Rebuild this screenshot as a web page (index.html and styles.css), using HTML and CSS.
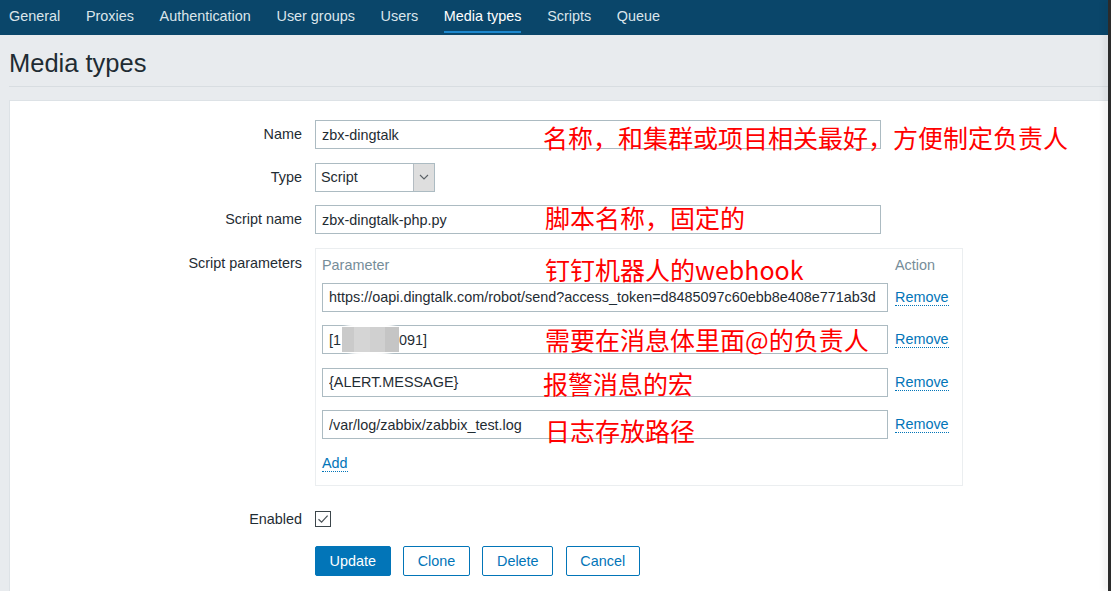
FILE: index.html
```html
<!DOCTYPE html>
<html lang="en">
<head>
<meta charset="utf-8">
<title>Media types</title>
<link rel="stylesheet" href="styles.css">
</head>
<body>
<div class="window">
  <div class="app">
    <nav class="topnav">
      <a class="tab" href="#">General</a>
      <a class="tab" href="#">Proxies</a>
      <a class="tab" href="#">Authentication</a>
      <a class="tab" href="#">User groups</a>
      <a class="tab" href="#">Users</a>
      <a class="tab active" href="#">Media types</a>
      <a class="tab" href="#">Scripts</a>
      <a class="tab" href="#">Queue</a>
    </nav>
    <header class="page-header"><h1>Media types</h1></header>
    <main class="panel">
      <form class="form">
        <div class="form-row">
          <label class="form-label">Name</label>
          <input class="text-input" type="text" value="zbx-dingtalk">
        </div>
        <div class="form-row">
          <label class="form-label">Type</label>
          <div class="select">
            <span class="select-value">Script</span>
            <span class="select-btn"><svg width="10" height="6" viewBox="0 0 10 6"><path d="M1 1 L5 5 L9 1" fill="none" stroke="#5b6166" stroke-width="1.1"/></svg></span>
          </div>
        </div>
        <div class="form-row">
          <label class="form-label">Script name</label>
          <input class="text-input" type="text" value="zbx-dingtalk-php.py">
        </div>
        <div class="form-row row-params">
          <label class="form-label label-params">Script parameters</label>
          <div class="params">
            <div class="params-head">
              <span>Parameter</span>
              <span>Action</span>
            </div>
            <div class="param-row">
              <input class="text-input" type="text" value="https://oapi.dingtalk.com/robot/send?access_token=d8485097c60ebb8e408e771ab3d">
              <a class="link" href="#">Remove</a>
            </div>
            <div class="param-row">
              <div class="text-input fake-input">[1<span class="mosaic"></span>091]</div>
              <a class="link" href="#">Remove</a>
            </div>
            <div class="param-row">
              <input class="text-input" type="text" value="{ALERT.MESSAGE}">
              <a class="link" href="#">Remove</a>
            </div>
            <div class="param-row">
              <input class="text-input" type="text" value="/var/log/zabbix/zabbix_test.log">
              <a class="link" href="#">Remove</a>
            </div>
            <div class="params-add"><a class="link" href="#">Add</a></div>
          </div>
        </div>
        <div class="form-row row-enabled">
          <label class="form-label">Enabled</label>
          <span class="checkbox"><svg width="14" height="14" viewBox="0 0 14 14"><path d="M2.5 7.2 L5.6 10.2 L11.6 3.6" fill="none" stroke="#4a5257" stroke-width="1.2"/></svg></span>
        </div>
        <div class="form-row">
          <span></span>
          <div class="buttons">
            <button type="button" class="btn btn-primary">Update</button>
            <button type="button" class="btn">Clone</button>
            <button type="button" class="btn">Delete</button>
            <button type="button" class="btn">Cancel</button>
          </div>
        </div>
      </form>
    </main>
  </div>
  <div class="edge"></div>
  <div class="notes">
    <span class="note note-1">名称，和集群或项目相关最好，方便制定负责人</span>
    <span class="note note-2">脚本名称，固定的</span>
    <span class="note note-3">钉钉机器人的webhook</span>
    <span class="note note-4">需要在消息体里面@的负责人</span>
    <span class="note note-5">报警消息的宏</span>
    <span class="note note-6">日志存放路径</span>
  </div>
</div>
</body>
</html>
```
FILE: styles.css
```css
html, body {
  margin: 0;
  padding: 0;
}

body {
  font-family: "Liberation Sans", Arial, sans-serif;
  font-size: 14.4px;
  color: #1f2c33;
  background: #e8ebee;
}

.window {
  position: relative;
  display: flex;
  width: 1111px;
  height: 591px;
  overflow: hidden;
}

.app {
  flex: 1;
  min-width: 0;
  display: flex;
  flex-direction: column;
}

.edge {
  width: 3px;
  background: #2b2b2b;
  box-shadow: -3px 0 6px rgba(0, 0, 0, 0.12);
}

/* top navigation */
.topnav {
  height: 35px;
  background: #0a466a;
  display: flex;
  gap: 25.7px;
  padding-left: 9px;
}

.tab {
  padding-top: 1px;
  height: 30px;
  line-height: 31px;
  border-bottom: 2px solid transparent;
  color: #dbe5eb;
  text-decoration: none;
  white-space: nowrap;
}

.tab.active {
  color: #ffffff;
  border-bottom-color: #1d87cd;
}

/* page header */
.page-header {
  margin-left: 9px;
  padding: 10px 0 5px;
  border-bottom: 1px solid #d8dde1;
}

.page-header h1 {
  margin: 0;
  font-weight: normal;
  font-size: 25.5px;
  line-height: 36px;
  color: #1f2c33;
}

/* panel */
.panel {
  flex: 1;
  margin: 13px 0 0 9px;
  background: #ffffff;
  border-left: 1px solid #dde2e6;
  border-top: 1px solid #dde2e6;
  padding-top: 19px;
}

.form-row {
  display: grid;
  grid-template-columns: 292px 1fr;
  column-gap: 13px;
  align-items: start;
  justify-items: start;
  margin-bottom: 13.5px;
}

.form-label {
  justify-self: end;
  text-align: right;
  line-height: 29px;
  white-space: nowrap;
}

.label-params {
  padding-top: 1px;
}

.text-input {
  box-sizing: border-box;
  width: 566px;
  height: 29px;
  margin: 0;
  padding: 0 6px;
  border: 1px solid #acbbc2;
  border-radius: 0;
  background: #ffffff;
  font: inherit;
  color: #1f2c33;
  outline: none;
}

.fake-input {
  display: flex;
  align-items: center;
  white-space: nowrap;
}

.mosaic {
  position: relative;
  z-index: 0;
  display: inline-block;
  width: 57px;
  height: 25px;
  margin-left: 1px;
}

.mosaic::before {
  content: "";
  position: absolute;
  z-index: -1;
  left: 0;
  top: -11px;
  width: 56px;
  height: 43px;
  border-radius: 50%;
  background: #ffffff;
  filter: blur(2px);
}

.mosaic::after {
  content: "";
  position: absolute;
  inset: 0;
  background: linear-gradient(to right,
    #cacaca 0, #cacaca 12px,
    #d5d5d5 12px, #d5d5d5 28px,
    #d0d0d0 28px, #d0d0d0 43px,
    #c5c5c5 43px, #c5c5c5 57px);
}

/* select */
.select {
  box-sizing: border-box;
  display: flex;
  width: 120px;
  height: 29px;
  border: 1px solid #acbbc2;
  background: #ffffff;
}

.select-value {
  flex: 1;
  padding-left: 5px;
  line-height: 27px;
}

.select-btn {
  width: 20px;
  background: #dedede;
  border-left: 1px solid #b4bcc2;
  display: flex;
  align-items: center;
  justify-content: center;
}

/* script parameters */
.row-params {
  margin-bottom: 19px;
}

.params {
  box-sizing: border-box;
  width: 648px;
  border: 1px solid #ebeef0;
  padding: 5px 12px 10px 6px;
}

.params-head {
  display: grid;
  grid-template-columns: 566px auto;
  column-gap: 7px;
  line-height: 22px;
  color: #768d99;
  margin-bottom: 7px;
}

.param-row {
  display: grid;
  grid-template-columns: 566px auto;
  column-gap: 7px;
  align-items: center;
  justify-items: start;
  margin-bottom: 13.5px;
}

.params-add {
  line-height: 20px;
  padding-bottom: 2px;
}

.link {
  color: #0275b8;
  text-decoration: none;
  border-bottom: 1px dotted #0275b8;
}

/* enabled */
.row-enabled {
  margin-bottom: 12.5px;
}

.checkbox {
  box-sizing: border-box;
  width: 16px;
  height: 16px;
  margin-top: 6.5px;
  border: 1px solid #3c464b;
  display: flex;
  align-items: center;
  justify-content: center;
}

/* buttons */
.buttons {
  display: flex;
  gap: 12.5px;
}

.btn {
  box-sizing: border-box;
  height: 30px;
  margin: 0;
  padding: 0 13.6px;
  border: 1px solid #0275b8;
  border-radius: 2px;
  background: #ffffff;
  color: #0275b8;
  font: inherit;
  line-height: 28px;
  cursor: pointer;
}

.btn-primary {
  background: #0275b8;
  color: #ffffff;
}

/* red annotations */
.notes {
  position: absolute;
  inset: 0;
  pointer-events: none;
}

.note {
  position: absolute;
  font-family: "Noto Sans CJK SC", "Noto Sans", sans-serif;
  font-size: 25px;
  line-height: 25px;
  color: #ff0000;
  white-space: nowrap;
}

.note-1 { left: 543px; top: 125px; }
.note-2 { left: 545px; top: 205px; }
.note-3 { left: 545px; top: 257px; }
.note-4 { left: 545px; top: 326.5px; }
.note-5 { left: 543px; top: 371px; }
.note-6 { left: 545px; top: 417.5px; }
```
